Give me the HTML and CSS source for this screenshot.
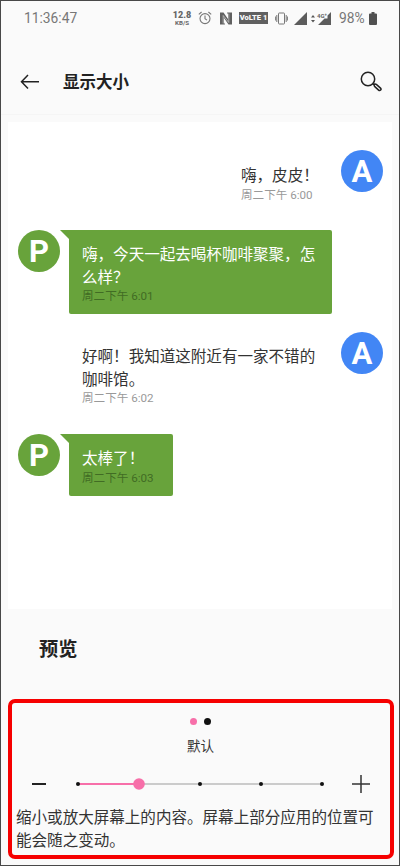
FILE: index.html
```html
<!DOCTYPE html>
<html lang="zh-CN">
<head>
<meta charset="utf-8">
<title>显示大小</title>
<link rel="stylesheet" href="styles.css">
</head>
<body>
<div class="phone">
  <div class="status">
    <span class="clock">11:36:47</span>
    <div class="speed"><b>12.8</b><span>KB/S</span></div>
    <svg class="alarm" width="14" height="14" viewBox="0 0 14 14" fill="none" stroke="#777" stroke-width="1.1"><circle cx="7" cy="7.6" r="5"/><path d="M7 4.6v3.2l2 1.3M.8 3.4 3.6 1M13.2 3.4 10.4 1"/></svg>
    <svg class="nfc" width="12" height="13" viewBox="0 0 12 13"><path d="M0 .5h3.500L8 7V2.500L7 .5h5v12H8.500L4 6v4.500l1 2H0z" fill="#606060"/><path d="M3.200 11.500V3.500l5.600 7V1.500" fill="none" stroke="#c4c4c4" stroke-width=".8"/></svg>
    <span class="volte">VoLTE 1</span>
    <svg class="vibrate" width="13" height="13" viewBox="0 0 13 13" fill="none" stroke="#777"><rect x="3.5" y="1" width="6" height="11" rx=".7"/><path d="M1.8 3v7M.4 4.5v4M11.2 3v7M12.6 4.5v4"/></svg>
    <svg class="signal" width="13" height="13" viewBox="0 0 13 13"><path d="M13 0v13H0z" fill="#5c5c5c"/></svg>
    <svg class="signal4g" width="22" height="15" viewBox="0 0 22 15"><path d="m3 4 2 2.500H1zM3 11.500 1 9h4z" fill="#555"/><path d="M21 1v13H8l6.500-6.500h3V4.500z" fill="#5c5c5c"/><text x="7" y="6.500">4G⁺</text></svg>
    <span class="percent">98%</span>
    <svg class="battery" width="8" height="13" viewBox="0 0 8 13"><path d="M2.500 0h3v1.500H7q1 0 1 1V12q0 1-1 1H1q-1 0-1-1V2.500q0-1 1-1h1.500z" fill="#505050"/></svg>
  </div>
  <header class="header">
    <svg width="20" height="16" viewBox="0 0 20 16" fill="none" stroke="#222" stroke-width="1.500"><path d="M8 1 1.500 7.700 8 14.400M1.500 7.700H19"/></svg>
    <h1>显示大小</h1>
    <svg width="22" height="22" viewBox="0 0 22 22" fill="none" stroke="#222" stroke-width="1.500"><circle cx="8" cy="8" r="6.700"/><path d="m12.800 12.800 1.700 1.400M14.400 13.100q1.400-.2 2.200.5l3.900 3.500q1 1 .1 2t-2 0l-3.800-3.500q-1-.9-.4-2.500z"/></svg>
  </header>
  <main class="chat">
    <div class="row sent one">
      <div class="plain"><p>嗨，皮皮！</p><time>周二下午 6:00</time></div>
      <span class="avatar blue">A</span>
    </div>
    <div class="row two">
      <span class="avatar">P</span>
      <div class="bubble wide"><p>嗨，今天一起去喝杯咖啡聚聚，怎么样？</p><time>周二下午 6:01</time></div>
    </div>
    <div class="row sent three">
      <div class="plain wide"><p>好啊！我知道这附近有一家不错的咖啡馆。</p><time>周二下午 6:02</time></div>
      <span class="avatar blue">A</span>
    </div>
    <div class="row four">
      <span class="avatar">P</span>
      <div class="bubble"><p>太棒了！</p><time>周二下午 6:03</time></div>
    </div>
  </main>
  <h2>预览</h2>
  <section class="panel">
    <div class="pages"><i class="current"></i><i></i></div>
    <div class="label">默认</div>
    <div class="control">
      <svg width="14" height="20" viewBox="0 0 14 20"><path d="M0 10h14" stroke="#222" stroke-width="2"/></svg>
      <svg class="slider" width="256" height="14" viewBox="0 0 256 14"><path d="M6 7h244" stroke="#bbb" stroke-width="1.500"/><path d="M6 7h61" stroke="#f76fa9" stroke-width="1.800"/><g fill="#111"><circle cx="6" cy="7" r="2"/><circle cx="128" cy="7" r="2"/><circle cx="189" cy="7" r="2"/><circle cx="250" cy="7" r="2"/></g><circle cx="67" cy="7" r="5.800" fill="#f76fa9"/></svg>
      <svg class="plus" width="18" height="20" viewBox="0 0 18 20"><path d="M0 10h18M9 1v18" stroke="#333" stroke-width="1.500"/></svg>
    </div>
    <p class="description">缩小或放大屏幕上的内容。屏幕上部分应用的位置可能会随之变动。</p>
  </section>
</div>
</body>
</html>
```
FILE: styles.css
```css
* { box-sizing: border-box; }
body { margin: 0; font-family: Roboto, "Noto Sans CJK SC", sans-serif; color: #333; }
h1, h2, p { margin: 0; }
svg { display: block; flex: none; }
.phone { width: 400px; height: 866px; border: 1px solid #484848; background: #fafafa; overflow: hidden; }
.status { height: 34px; display: flex; align-items: center; padding-left: 23px; color: #777; white-space: nowrap; }
.clock { font-size: 13.8px; width: 149px; }
.speed { display: flex; flex-direction: column; align-items: center; width: 18px; color: #666; font-size: 6.2px; line-height: 6px; font-weight: 700; }
.speed b { font-size: 9px; line-height: 9px; }
.alarm { margin-left: 7px; }
.nfc { margin-left: 8px; }
.volte { margin-left: 7px; width: 29px; height: 12px; background: #606060; color: #fafafa; font-size: 7.5px; line-height: 12px; font-weight: 900; text-align: center; }
.vibrate { margin-left: 7px; }
.signal { margin-left: 6px; }
.signal4g { margin-left: 3px; }
.signal4g text { font: 700 6px Roboto, sans-serif; fill: #666; }
.percent { margin-left: 7px; font-size: 13.8px; width: 26px; }
.battery { margin-left: 4px; }
.header { height: 80px; display: flex; align-items: flex-start; padding: 36px 17px 0 19px; border-bottom: 1px solid #f5f5f5; }
.header svg:first-child { margin-top: 3px; }
h1 { flex: 1; margin-left: 23px; font-size: 16.5px; line-height: 24px; font-weight: 700; color: #222; }
.chat { width: 384px; height: 487px; margin: 7px 0 0 7px; padding: 28px 9px 0 10px; background: #fff; }
.row { display: flex; align-items: flex-start; }
.sent { justify-content: space-between; }
.one { height: 80px; }
.two { height: 102px; }
.three { height: 102px; }
.avatar { width: 42px; height: 42px; border-radius: 50%; background: #68a33b; color: #fff; font: 700 31px/43px Roboto, sans-serif; text-align: center; flex: none; }
.blue { background: #4286f5; }
.plain { margin: 15px 0 0 223px; }
.plain.wide { width: 234px; margin: 14px 0 0 64px; }
.row p { font-size: 15.55px; line-height: 22.5px; }
time { display: block; font-size: 11.6px; line-height: 14px; color: #999; white-space: nowrap; }
.bubble { position: relative; width: 104px; margin-left: 9px; padding: 14px 10px 11px 13px; background: #68a33b; color: #fff; border-radius: 0 2px 2px 2px; }
.bubble.wide { width: 263px; }
.bubble::before { content: ""; position: absolute; left: -9px; top: 0; border-top: 10px solid #68a33b; border-left: 10px solid transparent; }
.bubble time { color: #416c24; }
h2 { margin: 26px 0 0 38px; font-size: 19.2px; line-height: 30px; font-weight: 700; color: #222; }
.panel { width: 386px; height: 160px; margin: 34px 0 0 7px; border: 4px solid #f60000; border-radius: 7px; padding: 15px 4px 0; }
.pages { display: flex; justify-content: center; gap: 7px; padding-right: 2px; }
.pages i { width: 7px; height: 7px; border-radius: 50%; background: #111; }
.pages .current { background: #f76fa9; }
.label { margin-top: 11px; font-size: 13.5px; line-height: 20px; text-align: center; padding-right: 1px; }
.control { height: 20px; margin-top: 18px; padding-left: 16px; display: flex; align-items: center; }
.slider { margin-left: 26px; }
.plus { margin-left: 24px; }
.description { margin-top: 13px; font-size: 15.55px; line-height: 22.5px; }
```
